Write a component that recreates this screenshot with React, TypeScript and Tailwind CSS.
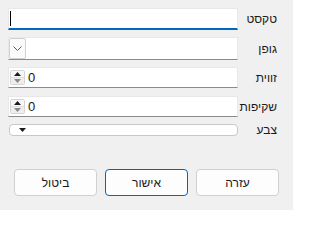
import React from "react";

const font = { fontFamily: '"Liberation Sans", "DejaVu Sans", sans-serif' };

function Label({ children }: { children: React.ReactNode }) {
  return (
    <div className="w-[39px] shrink-0 text-[12px] leading-none text-[#1a1a1a] text-right">{children}</div>
  );
}

function SpinBox() {
  return (
    <div dir="ltr" className="w-[230px] h-[21px] bg-white border border-[#e8e8e8] border-b-[#8a8a8a] flex items-center pl-[1px]">
      <div className="w-[15px] h-[15px] flex flex-col border border-[#d4d4d4] rounded-[2px] overflow-hidden">
        <div className="flex-1 bg-[#f7f7f7] flex items-center justify-center border-b border-[#e0e0e0]">
          <svg width="7" height="4" viewBox="0 0 7 4"><path d="M0 4 L3.5 0 L7 4 Z" fill="#1a1a1a" /></svg>
        </div>
        <div className="flex-1 bg-[#eeeeee] flex items-center justify-center">
          <svg width="7" height="4" viewBox="0 0 7 4"><path d="M0 0 L3.5 4 L7 0 Z" fill="#8a8a8a" /></svg>
        </div>
      </div>
      <span className="ml-[3px] text-[13px] leading-none text-[#1a1a1a]">0</span>
    </div>
  );
}

function Button({ children, def }: { children: React.ReactNode; def?: boolean }) {
  return (
    <div
      className={
        "w-[83px] h-[27px] rounded-[4px] flex items-center justify-center text-[12px] text-[#1a1a1a] bg-[#fdfdfd] border " +
        (def ? "border-[#0067c0]" : "border-[#d0d0d0]")
      }
    >
      {children}
    </div>
  );
}

export default function App() {
  return (
    <div dir="rtl" style={font} className="w-[293px] h-[210px] bg-[#f0f0f0] overflow-hidden">
      <div className="flex flex-col pt-[8px] pr-[16px] pl-[8px]">
        <div className="flex items-center h-[22px]">
          <Label>טקסט</Label>
          <div dir="ltr" className="w-[230px] h-[22px] bg-white border border-[#e8e8e8] border-b-2 border-b-[#0067c0] flex items-center pl-[1px]">
            <div className="w-[1px] h-[15px] bg-black" />
          </div>
        </div>
        <div className="flex items-center h-[23px] mt-[7px]">
          <Label>גופן</Label>
          <div dir="ltr" className="w-[230px] h-[23px] bg-white border border-[#e8e8e8] border-b-[#8a8a8a] flex items-start">
            <div className="w-[17px] h-[21px] bg-[#fbfbfb] border border-[#d0d0d0] rounded-[2px] flex items-center justify-center">
              <svg width="9" height="5" viewBox="0 0 9 5"><path d="M0.5 0.5 L4.5 4.5 L8.5 0.5" fill="none" stroke="#5a5a5a" strokeWidth="1" /></svg>
            </div>
          </div>
        </div>
        <div className="flex items-center h-[21px] mt-[7px]">
          <Label>זווית</Label>
          <SpinBox />
        </div>
        <div className="flex items-center h-[21px] mt-[8px]">
          <Label>שקיפות</Label>
          <SpinBox />
        </div>
        <div className="flex items-center h-[12px] mt-[7px]">
          <Label>צבע</Label>
          <div dir="ltr" className="w-[229px] h-[12px] bg-white border border-[#c8c8c8] rounded-[4px] flex items-center pl-[9px]">
            <svg width="7" height="4" viewBox="0 0 7 4"><path d="M0 0 L3.5 4 L7 0 Z" fill="#1a1a1a" /></svg>
          </div>
        </div>
      </div>
      <div className="flex gap-2 pr-[14px] mt-[33px]">
        <Button>עזרה</Button>
        <Button def>אישור</Button>
        <Button>ביטול</Button>
      </div>
    </div>
  );
}
